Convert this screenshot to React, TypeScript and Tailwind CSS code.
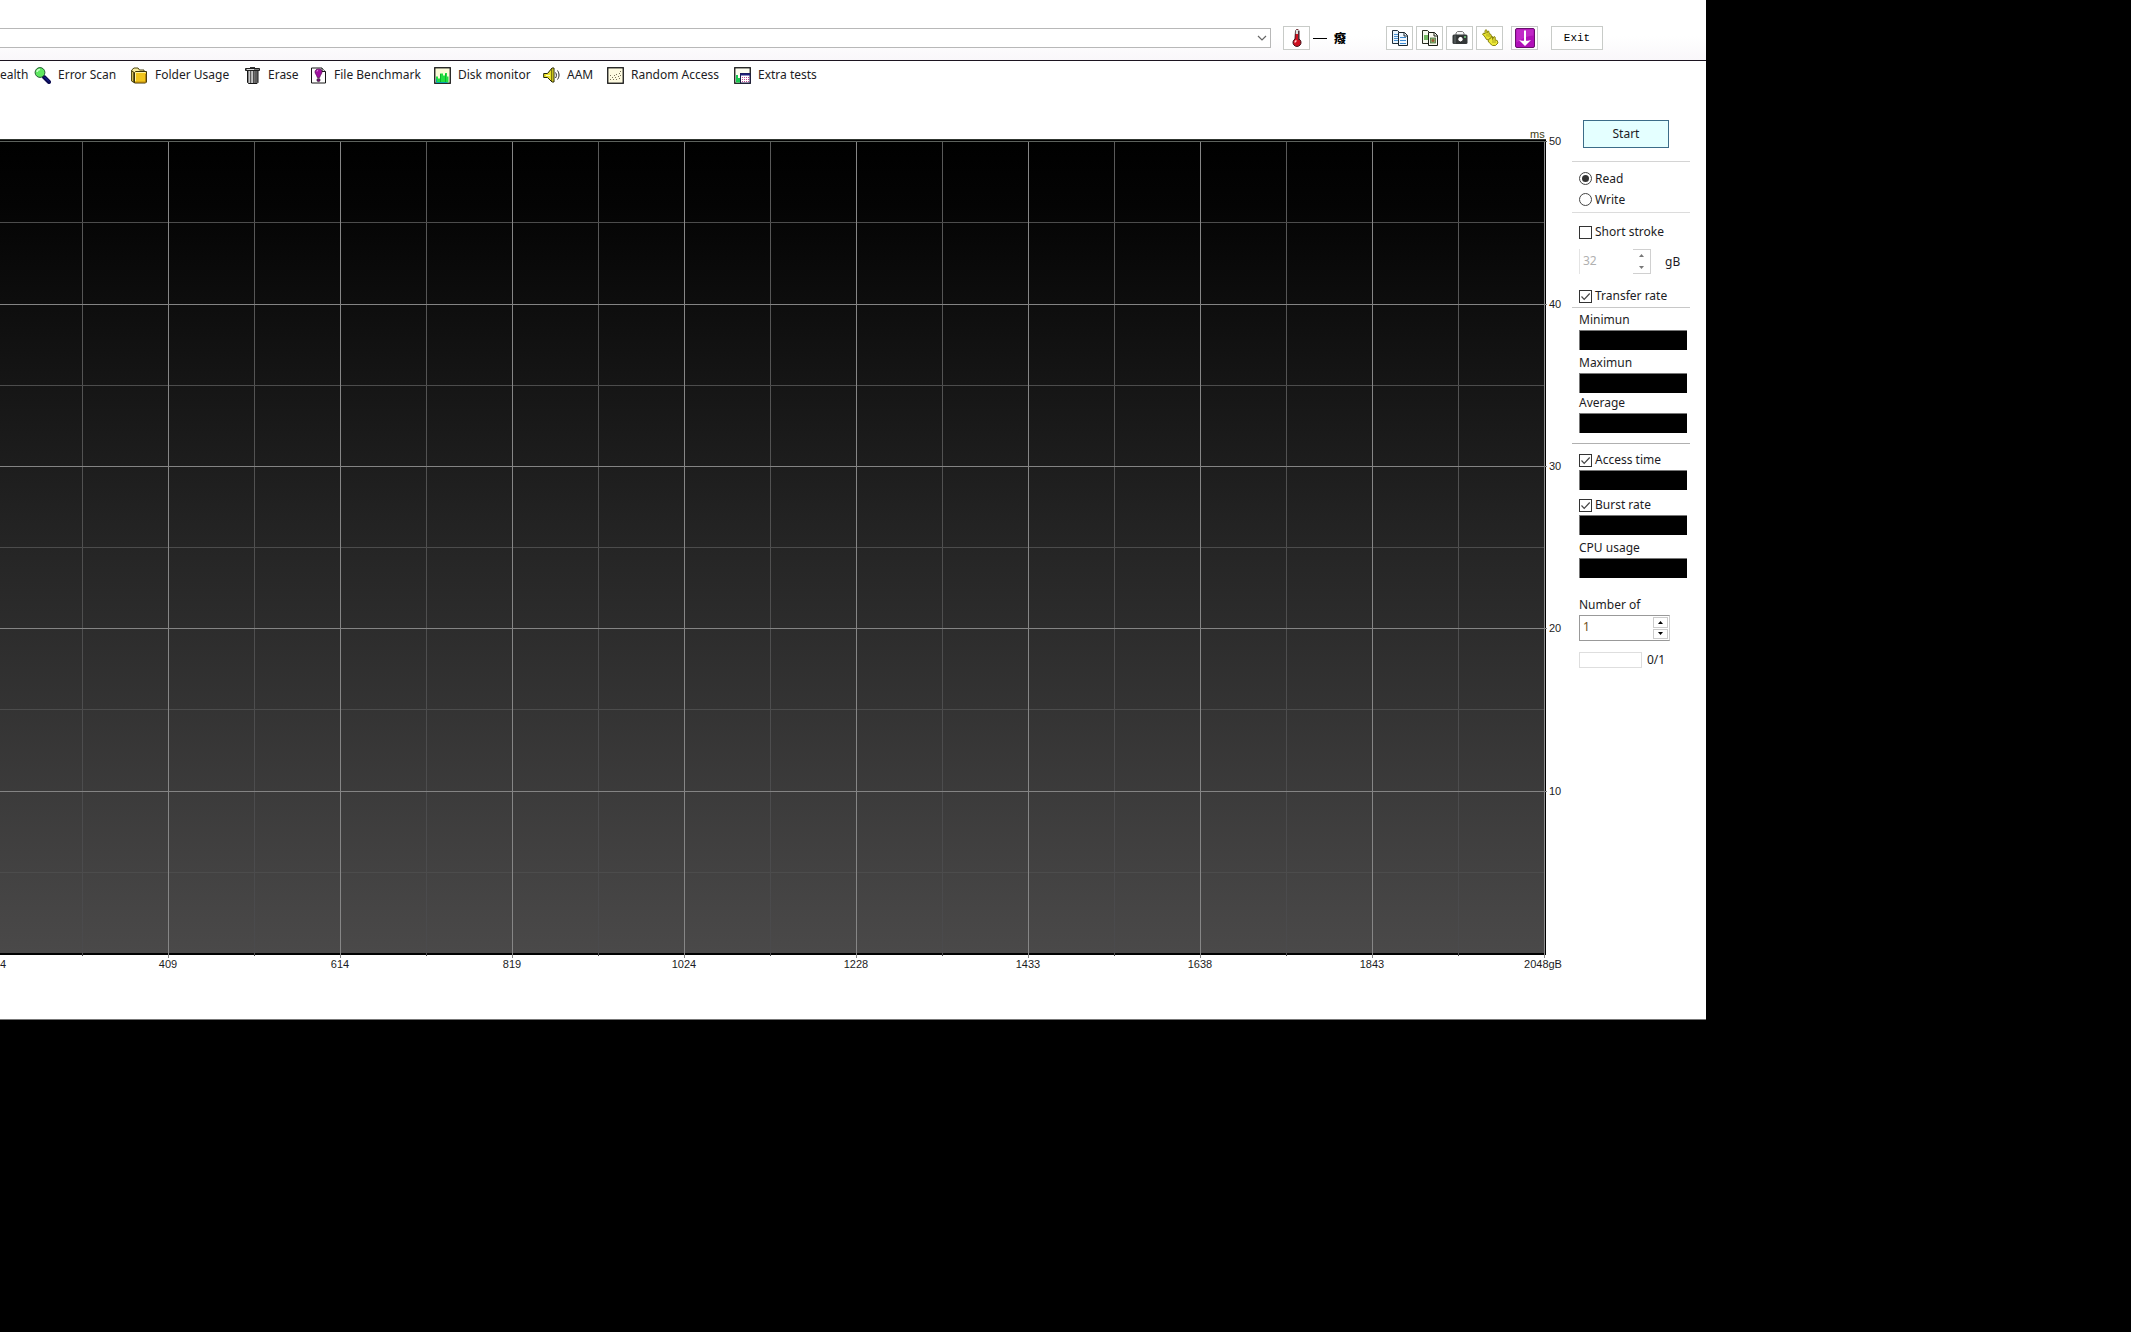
import React from "react";

const majors = [
  { x: 168, label: "409" },
  { x: 340, label: "614" },
  { x: 512, label: "819" },
  { x: 684, label: "1024" },
  { x: 856, label: "1228" },
  { x: 1028, label: "1433" },
  { x: 1200, label: "1638" },
  { x: 1372, label: "1843" },
];
const minors = [82, 254, 426, 598, 770, 942, 1114, 1286, 1458];
const rows = [
  { y: 141, label: "50" },
  { y: 304, label: "40" },
  { y: 466, label: "30" },
  { y: 628, label: "20" },
  { y: 791, label: "10" },
];

function Chart() {
  return (
    <svg
      viewBox="0 89 1572 930"
      className="block h-auto w-full"
      shapeRendering="crispEdges"
      fontFamily='"Liberation Sans", Arial, sans-serif'
      fontSize="11"
      fill="#1c1c24"
      role="img"
      aria-label="Transfer rate and access time chart"
    >
      <defs>
        <linearGradient id="plot" x1="0" y1="0" x2="0" y2="1">
          <stop offset="0" stopColor="#000000" />
          <stop offset="0.08" stopColor="#040404" />
          <stop offset="0.5" stopColor="#252525" />
          <stop offset="1" stopColor="#4a4949" />
        </linearGradient>
        <linearGradient id="minor" gradientUnits="userSpaceOnUse" x1="0" y1="141" x2="0" y2="953">
          <stop offset="0" stopColor="#5a5a5a" />
          <stop offset="0.5" stopColor="#505050" />
          <stop offset="1" stopColor="#4a4a4c" />
        </linearGradient>
      </defs>
      <rect x="0" y="139" width="1546" height="816" fill="#000" />
      <rect x="0" y="141" width="1545" height="812" fill="url(#plot)" />
      <rect x="0" y="139" width="1546" height="1" fill="#303630" />
      {minors.map((x) => (
        <rect key={x} x={x} y="141" width="1" height="815" fill="url(#minor)" />
      ))}
      {rows.map((r) => (
        <rect key={r.y} x="0" y={r.y + 81} width="1545" height="1" fill="#4c4c4c" />
      ))}
      {majors.map((m) => (
        <rect key={m.x} x={m.x} y="141" width="1" height="817" fill="#868686" />
      ))}
      <rect x="1544" y="141" width="1" height="817" fill="#8c8c8c" />
      {rows.map((r) => (
        <rect key={r.y} x="0" y={r.y} width="1547" height="1" fill={r.y < 150 ? "#5c615c" : "#848484"} />
      ))}
      {rows.map((r) => (
        <text key={r.y} x="1549" y={r.y + 4}>
          {r.label}
        </text>
      ))}
      <text x="0" y="968">
        4
      </text>
      {majors.map((m) => (
        <text key={m.x} x={m.x} y="968" textAnchor="middle">
          {m.label}
        </text>
      ))}
      <text x="1543" y="968" textAnchor="middle">
        2048gB
      </text>
      <text x="1530" y="138" fill="#3c3c10">
        ms
      </text>
    </svg>
  );
}

const iconClass = "block h-[17px] w-[17px] shrink-0";

const MagnifierIcon = () => (
  <svg viewBox="0 0 17 17" className={iconClass}>
    <path d="M10 10 15 15" stroke="#0a0a50" strokeWidth="4" strokeLinecap="round" />
    <path d="M10.500 10 15 14.500" stroke="#1a2cb0" strokeWidth="1" />
    <circle cx="6" cy="5.500" r="4.900" fill="#5fe860" stroke="#245c34" />
    <path d="M3 5a3 3 0 0 1 3-2.500" stroke="#c8ffc8" strokeWidth="1.500" fill="none" />
  </svg>
);
const FolderIcon = () => (
  <svg viewBox="0 0 17 17" className={iconClass}>
    <path d="M.7 14V3L3 1h4l1.500 2H13v3L4 14z" fill="#fbf0a0" stroke="#4c4410" />
    <path d="M.7 14V4l2 1v10.500z" fill="#f0d868" stroke="#4c4410" />
    <path d="M3.500 16V5.500l1-1h11V15l-1 1z" fill="#f2c61c" stroke="#3c3408" />
    <path d="M4.500 14V5.500h10" stroke="#fff4a0" fill="none" />
    <path d="M5 15.200h9.700V7" stroke="#a8780c" fill="none" />
  </svg>
);
const TrashIcon = () => (
  <svg viewBox="0 0 17 17" className={iconClass}>
    <path d="M3.500 3.500h10.500v12l-1 1H4.500l-1-1z" fill="#707070" stroke="#151515" />
    <path d="M5.500 4v12" stroke="#c8c8c8" strokeWidth="1.500" />
    <path d="M8 4v12" stroke="#e4e4e4" strokeWidth="1.500" />
    <path d="M6.700 4v12M9.500 4v12M12 4v12" stroke="#444" strokeWidth=".8" />
    <path d="M1.500 1.500h14v2h-14z" fill="#777" stroke="#202020" />
    <path d="M6 .5h5" stroke="#333" />
    <path d="M3 2.500h7" stroke="#ddd" />
  </svg>
);
const FileIcon = () => (
  <svg viewBox="0 0 17 17" className={iconClass}>
    <path d="M1.500 1h10.500l3.500 3.500V16H1.500z" fill="#fff" stroke="#161616" />
    <path d="M12 1v3.500h3.500" fill="#ddd" stroke="#161616" />
    <path
      d="M8.500 2C6.500 2 5 3.200 5 5c0 1.800 1.800 3 2.300 5.500h2.400C10.200 8 12 6.800 12 5c0-1.800-1.500-3-3.500-3z"
      fill="#a010a0"
      stroke="#500850"
      strokeWidth=".7"
    />
    <path d="M7 4.500c0-.8.500-1.300 1.200-1.500" stroke="#f0a0f0" fill="none" />
    <circle cx="8.500" cy="13" r="1.600" fill="#701070" stroke="#301030" strokeWidth=".7" />
  </svg>
);
const MonitorIcon = () => (
  <svg viewBox="0 0 17 17" className={iconClass}>
    <rect x=".75" y=".75" width="15.500" height="15.500" fill="#fbfbd8" stroke="#141414" strokeWidth="1.300" />
    <path d="M2 15.500V9.500h2v2h2V6.500h3v2h2V6h2v3.500h1.500v6z" fill="#20e040" />
    <path d="M6.500 7v8M11.500 7v8" stroke="#0cb42c" />
    <path d="M2.500 12v3.500h11" stroke="#06a0a8" fill="none" />
  </svg>
);
const SpeakerIcon = () => (
  <svg viewBox="0 0 17 17" className={iconClass}>
    <path d="M.7 6.500h3.800L9 1h2v14H9l-4.500-4.500H.7z" fill="#ece42c" stroke="#242408" />
    <path d="M8.700 2v12" stroke="#6c6810" strokeWidth="1.200" />
    <path d="M3 8.500h4" stroke="#fffcc0" />
    <path d="M12.500 5.500c1.200 1.800 1.200 3.700 0 5.500M14.500 3.500c2 3 2 6.200 0 9" stroke="#222" fill="none" />
  </svg>
);
const RandomIcon = () => (
  <svg viewBox="0 0 17 17" className={iconClass}>
    <rect x=".75" y=".75" width="15.500" height="15.500" fill="#fdfae0" stroke="#141414" strokeWidth="1.300" />
    <path
      d="M3 12.500h1M5 10.500h1M3 8.500h1M6 12.500h1M7 8.500h1M8 10.500h1M9 7.500h1M9 12.500h1M11 9.500h1M12 6.500h1M12 11.500h1M13 4.500h1M13 8.500h1"
      stroke="#77705a"
    />
  </svg>
);
const ExtraIcon = () => (
  <svg viewBox="0 0 17 17" className={iconClass}>
    <rect x=".75" y=".75" width="15.500" height="15.500" fill="#fdfdf0" stroke="#141414" strokeWidth="1.300" />
    <path d="M2 15.500V8h2v3h2v4.500z" fill="#18c850" />
    <rect x="6.500" y="6.500" width="9.500" height="9.500" fill="#fff" stroke="#181848" />
    <path d="M6.500 7.500h9.500" stroke="#20207c" strokeWidth="2" />
    <path d="M8 10.500h7M8 12.500h7M8 14.500h7" stroke="#c04890" strokeDasharray="1 1" />
  </svg>
);

const tools = [
  { label: "Error Scan", Icon: MagnifierIcon, width: "w-[97px]" },
  { label: "Folder Usage", Icon: FolderIcon, width: "w-[113px]" },
  { label: "Erase", Icon: TrashIcon, width: "w-[66px]" },
  { label: "File Benchmark", Icon: FileIcon, width: "w-[124px]" },
  { label: "Disk monitor", Icon: MonitorIcon, width: "w-[109px]" },
  { label: "AAM", Icon: SpeakerIcon, width: "w-[64px]" },
  { label: "Random Access", Icon: RandomIcon, width: "w-[127px]" },
  { label: "Extra tests", Icon: ExtraIcon, width: "w-[90px]" },
];

const ThermometerIcon = () => (
  <svg viewBox="0 0 12 20" className="h-5 w-3">
    <path d="M4.500 3a1.800 1.800 0 0 1 3.500 0v8a4 4 0 1 1-4 0z" fill="#d01020" stroke="#401018" />
    <path d="M4.700 2h3v4h-3z" fill="#dce4e0" />
    <path d="M7.500 3v9" stroke="#503038" />
    <path d="M4 14.500c0-1 .5-1.500 1.500-2" stroke="#ffd0d0" strokeWidth="1.500" fill="none" />
  </svg>
);
const CopyTextIcon = () => (
  <svg viewBox="0 0 18 18" className="h-[18px] w-[18px]">
    <path d="M1.500 1.500h5l2 2v11h-7z" fill="#e8f4fc" stroke="#20303c" />
    <path d="M3 5.500h4M3 7.500h4M3 9.500h4M3 11.500h4" stroke="#4a90d0" />
    <path d="M7.500 3.500h6l3 3v10h-9z" fill="#f0f8ff" stroke="#18242c" />
    <path d="M13 3.500V7h3.500" fill="none" stroke="#18242c" />
    <path d="M9 8.500h6M9 11.500h6M9 14.500h6" stroke="#3c88d0" />
  </svg>
);
const CopyImageIcon = () => (
  <svg viewBox="0 0 18 18" className="h-[18px] w-[18px]">
    <path d="M1.500 1.500h5l2 2v11h-7z" fill="#f4f8ec" stroke="#282c20" />
    <rect x="3" y="6" width="4" height="5" fill="#70b860" />
    <path d="M7.500 3.500h6l3 3v10h-9z" fill="#fafaf0" stroke="#181c14" />
    <path d="M13 3.500V7h3.500" fill="none" stroke="#181c14" />
    <rect x="9.500" y="9" width="5" height="5" fill="#88b870" stroke="#507040" strokeWidth=".8" />
    <circle cx="12" cy="11.500" r="1.500" fill="#a05838" />
  </svg>
);
const CameraIcon = () => (
  <svg viewBox="0 0 18 18" className="h-[18px] w-[18px]">
    <path d="M5 6V4l1.500-1.500h5L13 4v2" fill="#f4f4f4" stroke="#777" />
    <rect x="1.500" y="5.500" width="15" height="9.500" rx="1.500" fill="#343838" />
    <path d="M4 6.500v8" stroke="#687070" />
    <circle cx="9.500" cy="10.200" r="2.800" fill="#fff" stroke="#181818" />
    <rect x="13" y="7" width="2" height="2" fill="#68b070" />
  </svg>
);
const GloveIcon = () => (
  <svg viewBox="0 0 18 18" className="h-[18px] w-[18px]">
    <path
      d="M1.500 5 3 4l1 1V1.500l1-.8 1 .8V4l1-2 1 .5v2l2 1 .5 3-2 2.500-3-.5L4 8z"
      fill="#e8e430"
      stroke="#8a8410"
    />
    <path
      d="M7 12l1.500-2.500L10 9l.5-2 1 .5v3L13 7.500l1.200.7V11l2 .5.800 2.500-2.500 2.500h-3L9 14.500z"
      fill="#ece838"
      stroke="#8a8410"
    />
    <path d="M6 4.500v3M8 5v3M12 10.500v3.500M14 11v3" stroke="#a8a218" strokeWidth=".9" />
  </svg>
);
const DownIcon = () => (
  <svg viewBox="0 0 20 20" className="h-5 w-5">
    <rect x=".5" y=".5" width="19" height="19" rx="1.500" fill="#b010b8" stroke="#68106c" />
    <path d="M1.500 1.500h17v6c-6 .5-12 3-17 7z" fill="#cc38d0" opacity=".6" />
    <path d="M10 2.500V13" stroke="#fff" strokeWidth="2" fill="none" />
    <path d="M4 12l3 .7h6l3-.7-6 6z" fill="#fff" />
  </svg>
);

const headerButton =
  "flex h-6 w-[27px] shrink-0 items-center justify-center border border-[#c8cbc8] bg-white";

function Check({ label, checked = false }: { label: string; checked?: boolean }) {
  return (
    <label className="ml-[7px] flex h-5 items-center gap-[3px] whitespace-nowrap">
      <span className="grid h-[13px] w-[13px] place-items-center">
        <input
          type="checkbox"
          defaultChecked={checked}
          className="peer col-start-1 row-start-1 h-[13px] w-[13px] appearance-none border border-[#333] bg-white"
        />
        <svg
          viewBox="0 0 13 13"
          className="pointer-events-none invisible col-start-1 row-start-1 h-[13px] w-[13px] peer-checked:visible"
        >
          <path d="M2.500 6.500 5.200 9.300 10.700 3.500" fill="none" stroke="#444" strokeWidth="1.200" />
        </svg>
      </span>
      {label}
    </label>
  );
}

function Radio({ label, checked = false }: { label: string; checked?: boolean }) {
  return (
    <label className="ml-[7px] flex h-[21px] items-center gap-[3px]">
      <span className="grid h-[13px] w-[13px] place-items-center">
        <input
          type="radio"
          name="mode"
          defaultChecked={checked}
          className="peer col-start-1 row-start-1 h-[13px] w-[13px] appearance-none rounded-full border border-[#444] bg-white"
        />
        <span className="pointer-events-none invisible col-start-1 row-start-1 h-[7px] w-[7px] rounded-full bg-[#333] peer-checked:visible" />
      </span>
      {label}
    </label>
  );
}

const Caption = ({ children }: { children: string }) => (
  <div className="ml-[7px] flex h-5 items-center whitespace-nowrap">{children}</div>
);
const Bar = () => <div className="ml-[7px] h-5 w-[108px] border-t border-l border-[#777] bg-black" />;

const Arrow = ({ up = false, color }: { up?: boolean; color: string }) => (
  <svg viewBox="0 0 5 3" className="h-[3px] w-[5px]">
    <path d={up ? "M0 3 2.500 0 5 3z" : "M0 0 2.500 3 5 0z"} fill={color} />
  </svg>
);

export default function App() {
  return (
    <div className="min-h-screen bg-black pr-[425px] font-['Noto_Sans','Noto_Sans_CJK_SC',sans-serif] text-[12px] leading-5 text-[#1c1c24]">
      <div className="overflow-hidden border-b border-[#777] bg-white">
        <header className="flex h-[61px] items-start border-b border-[#1c1420] bg-linear-to-b from-white from-60% to-[#f9f7fa] pt-[26px]">
          <div className="mt-[2px] grid h-5 flex-1">
            <select
              aria-label="Drive"
              className="col-start-1 row-start-1 h-5 appearance-none border border-l-0 border-[#b8b8b8] bg-white"
            >
              <option></option>
            </select>
            <svg
              viewBox="0 0 10 6"
              className="pointer-events-none col-start-1 row-start-1 mr-1 h-[6px] w-[10px] self-center justify-self-end"
            >
              <path d="M1 1l4 4 4-4" fill="none" stroke="#666" strokeWidth="1.200" />
            </svg>
          </div>
          <button className={`${headerButton} ml-3`} aria-label="Temperature">
            <ThermometerIcon />
          </button>
          <div className="flex h-6 w-[76px] shrink-0 items-center gap-[7px] pl-[3px] text-[12px] font-black text-black">
            <span className="h-px w-[14px] bg-black" />
            <span className="font-['Noto_Sans_CJK_SC',sans-serif]">癈</span>
          </div>
          <div className="flex gap-[3px]">
            <button className={headerButton} aria-label="Copy text">
              <CopyTextIcon />
            </button>
            <button className={headerButton} aria-label="Copy screenshot">
              <CopyImageIcon />
            </button>
            <button className={headerButton} aria-label="Save screenshot">
              <CameraIcon />
            </button>
            <button className={headerButton} aria-label="Options">
              <GloveIcon />
            </button>
          </div>
          <button className={`${headerButton} ml-2`} aria-label="Minimize">
            <DownIcon />
          </button>
          <button className="mr-[103px] ml-[13px] h-6 w-[52px] shrink-0 border border-[#c8cbc8] bg-white font-['Liberation_Mono',monospace] text-[11px] leading-5 text-black">
            Exit
          </button>
        </header>

        <nav className="flex h-7 items-center whitespace-nowrap">
          <button className="flex w-[34px] shrink-0 justify-start">ealth</button>
          {tools.map(({ label, Icon, width }) => (
            <button key={label} className={`flex shrink-0 items-center gap-[7px] ${width}`}>
              <Icon />
              {label}
            </button>
          ))}
        </nav>

        <main className="flex items-start">
          <div className="min-w-0 flex-1">
            <Chart />
          </div>
          <aside className="w-[134px] shrink-0 pt-[31px] pr-4">
            <button className="ml-[11px] block h-7 w-[86px] border border-[#3c6c88] bg-[#e4ffff]">Start</button>
            <hr className="mt-[13px] border-[#d4d4d4]" />
            <div className="mt-[6px]">
              <Radio label="Read" checked />
              <Radio label="Write" />
            </div>
            <hr className="mt-[2px] border-[#dcdcdc]" />
            <div className="mt-[9px]">
              <Check label="Short stroke" />
            </div>
            <div className="mt-[7px] ml-[7px] flex h-[25px] items-center">
              <input
                aria-label="Short stroke size"
                defaultValue="32"
                disabled
                className="h-full w-[54px] border-l border-[#e4e4e4] pb-[2px] pl-[3px] text-[#b0b0b0]"
              />
              <span className="flex h-full w-[18px] flex-col border border-l-0 border-[#d0d0d0]">
                <button aria-label="Increase size" disabled className="flex flex-1 items-center justify-center">
                  <Arrow up color="#777" />
                </button>
                <button aria-label="Decrease size" disabled className="flex flex-1 items-center justify-center">
                  <Arrow color="#777" />
                </button>
              </span>
              <span className="ml-[14px]">gB</span>
            </div>
            <div className="mt-3">
              <Check label="Transfer rate" checked />
            </div>
            <hr className="mt-px border-[#c8c8c8]" />
            <div className="mt-[2px]">
              <Caption>Minimun</Caption>
              <Bar />
            </div>
            <div className="mt-[3px]">
              <Caption>Maximun</Caption>
              <Bar />
            </div>
            <div>
              <Caption>Average</Caption>
              <Bar />
            </div>
            <hr className="mt-[10px] border-[#b0b0b0]" />
            <div className="mt-[6px]">
              <Check label="Access time" checked />
              <Bar />
            </div>
            <div className="mt-[5px]">
              <Check label="Burst rate" checked />
              <Bar />
            </div>
            <div className="mt-[3px]">
              <Caption>CPU usage</Caption>
              <Bar />
            </div>
            <div className="mt-[17px]">
              <Caption>Number of</Caption>
            </div>
            <div className="ml-[7px] flex h-[26px] w-[91px] border border-[#999] border-r-[#ccc]">
              <input
                aria-label="Number of runs"
                defaultValue="1"
                className="w-[72px] pb-[2px] pl-[3px] text-[#70501c]"
              />
              <span className="m-px flex flex-1 flex-col gap-px">
                <button aria-label="More runs" className="flex flex-1 items-center justify-center border border-[#ccc]">
                  <Arrow up color="#000" />
                </button>
                <button aria-label="Fewer runs" className="flex flex-1 items-center justify-center border border-[#ccc]">
                  <Arrow color="#000" />
                </button>
              </span>
            </div>
            <div className="mt-[9px] ml-[7px] flex h-5 items-center gap-[5px]">
              <div role="progressbar" aria-label="Runs completed" className="h-4 w-[63px] border border-[#dedede]" />
              <span>0/1</span>
            </div>
          </aside>
        </main>
      </div>
    </div>
  );
}
